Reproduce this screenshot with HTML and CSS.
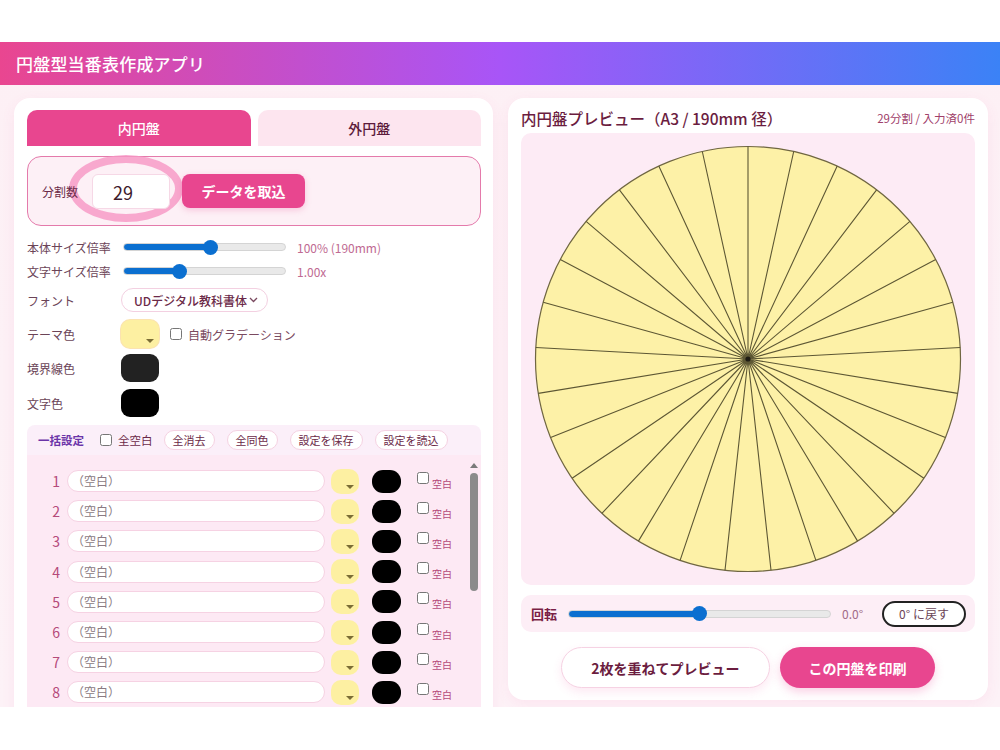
FILE: index.html
```html
<!DOCTYPE html>
<html lang="ja">
<head>
  <meta charset="UTF-8">
  <meta name="viewport" content="width=device-width, initial-scale=1.0">
  <title>円盤型当番表作成アプリ</title>
  <link rel="stylesheet" href="styles.css">
</head>
<body>
  <div class="screen">
    <header class="app-header">
      <h1>円盤型当番表作成アプリ</h1>
    </header>

    <main class="workspace">
      <section class="panel editor">
        <div class="tabs">
          <div class="tab active">内円盤</div>
          <div class="tab">外円盤</div>
        </div>

        <div class="split-box">
          <span class="highlight-ring"></span>
          <span class="split-label">分割数</span>
          <div class="count-input">29</div>
          <button class="import-button">データを取込</button>
        </div>

        <div class="setting-row slim first">
          <span class="setting-label">本体サイズ倍率</span>
          <input class="range" type="range" min="0" max="100" value="54" style="--fill: 88px">
          <span class="setting-value">100% (190mm)</span>
        </div>
        <div class="setting-row slim">
          <span class="setting-label">文字サイズ倍率</span>
          <input class="range" type="range" min="0" max="100" value="33" style="--fill: 57px">
          <span class="setting-value">1.00x</span>
        </div>
        <div class="setting-row font-row">
          <span class="setting-label">フォント</span>
          <div class="font-select">
            UDデジタル教科書体
            <svg width="9" height="6" viewBox="0 0 9 6"><path d="M1 1l3.5 3.5L8 1" fill="none" stroke="#7a4a60" stroke-width="1.3"/></svg>
          </div>
        </div>
        <div class="setting-row">
          <span class="setting-label">テーマ色</span>
          <div class="swatch yellow"></div>
          <label class="check-label"><input type="checkbox"> 自動グラデーション</label>
        </div>
        <div class="setting-row">
          <span class="setting-label">境界線色</span>
          <div class="swatch charcoal"></div>
        </div>
        <div class="setting-row last">
          <span class="setting-label">文字色</span>
          <div class="swatch black"></div>
        </div>

        <div class="bulk-bar">
          <span class="bulk-title">一括設定</span>
          <label class="check-label bulk-check"><input type="checkbox"> 全空白</label>
          <button class="pill">全消去</button>
          <button class="pill">全同色</button>
          <button class="pill">設定を保存</button>
          <button class="pill">設定を読込</button>
        </div>

        <div class="segment-list">
          <div class="segment-rows">
            <div class="segment-row"><span class="seg-num">1</span><div class="seg-input">（空白）</div><div class="seg-color"></div><div class="seg-text"></div><label class="seg-blank"><input type="checkbox"><span>空白</span></label></div>
            <div class="segment-row"><span class="seg-num">2</span><div class="seg-input">（空白）</div><div class="seg-color"></div><div class="seg-text"></div><label class="seg-blank"><input type="checkbox"><span>空白</span></label></div>
            <div class="segment-row"><span class="seg-num">3</span><div class="seg-input">（空白）</div><div class="seg-color"></div><div class="seg-text"></div><label class="seg-blank"><input type="checkbox"><span>空白</span></label></div>
            <div class="segment-row"><span class="seg-num">4</span><div class="seg-input">（空白）</div><div class="seg-color"></div><div class="seg-text"></div><label class="seg-blank"><input type="checkbox"><span>空白</span></label></div>
            <div class="segment-row"><span class="seg-num">5</span><div class="seg-input">（空白）</div><div class="seg-color"></div><div class="seg-text"></div><label class="seg-blank"><input type="checkbox"><span>空白</span></label></div>
            <div class="segment-row"><span class="seg-num">6</span><div class="seg-input">（空白）</div><div class="seg-color"></div><div class="seg-text"></div><label class="seg-blank"><input type="checkbox"><span>空白</span></label></div>
            <div class="segment-row"><span class="seg-num">7</span><div class="seg-input">（空白）</div><div class="seg-color"></div><div class="seg-text"></div><label class="seg-blank"><input type="checkbox"><span>空白</span></label></div>
            <div class="segment-row"><span class="seg-num">8</span><div class="seg-input">（空白）</div><div class="seg-color"></div><div class="seg-text"></div><label class="seg-blank"><input type="checkbox"><span>空白</span></label></div>
          </div>
          <div class="scroll-track">
            <span class="scroll-arrow"></span>
            <span class="scroll-thumb"></span>
          </div>
        </div>
      </section>

      <section class="panel preview">
        <div class="preview-head">
          <h2>内円盤プレビュー（A3 / 190mm 径）</h2>
          <span class="preview-meta">29分割 / 入力済0件</span>
        </div>

        <div class="disk-area">
          <svg width="454" height="452" viewBox="-227 -226 454 452">
            <circle cx="0" cy="0" r="212.5" fill="#fdf1a7" stroke="#6f6641" stroke-width="1.2"/>
            <path fill="none" stroke="#5d5734" stroke-width="1.1" d="
              M0 0L0 -212.5 M0 0L45.7 -207.5 M0 0L89.2 -192.9 M0 0L128.6 -169.2
              M0 0L161.9 -137.6 M0 0L187.7 -99.5 M0 0L204.8 -56.8 M0 0L212.2 -11.5
              M0 0L209.7 34.4 M0 0L197.4 78.6 M0 0L175.9 119.3 M0 0L146.1 154.3
              M0 0L109.6 182.1 M0 0L67.9 201.4 M0 0L23 211.2 M0 0L-23 211.2
              M0 0L-67.9 201.4 M0 0L-109.6 182.1 M0 0L-146.1 154.3 M0 0L-175.9 119.3
              M0 0L-197.4 78.6 M0 0L-209.7 34.4 M0 0L-212.2 -11.5 M0 0L-204.8 -56.8
              M0 0L-187.7 -99.5 M0 0L-161.9 -137.6 M0 0L-128.6 -169.2 M0 0L-89.2 -192.9
              M0 0L-45.7 -207.5"/>
            <circle cx="0" cy="0" r="2.6" fill="#1f1c14"/>
          </svg>
        </div>

        <div class="rotate-bar">
          <span class="rotate-label">回転</span>
          <input class="range rotate-range" type="range" min="-180" max="180" value="0" style="--fill: 132px">
          <span class="rotate-value">0.0°</span>
          <button class="reset-button">0° に戻す</button>
        </div>

        <div class="action-row">
          <button class="action secondary">2枚を重ねてプレビュー</button>
          <button class="action primary">この円盤を印刷</button>
        </div>
      </section>
    </main>
  </div>
</body>
</html>
```

FILE: styles.css
```css
body {
  margin: 0;
  background-color: #fff;
  font-family: "Noto Sans CJK JP", "Noto Sans", sans-serif;
  color: #6b2a48;
}

button {
  font-family: inherit;
  cursor: pointer;
}

.screen {
  margin-top: 42px;
  height: 665px;
  overflow: hidden;
  background: linear-gradient(180deg, #fdf0f5 0%, #fdf2f7 100%);
}

.app-header {
  height: 43px;
  background: linear-gradient(90deg, #e94690 0%, #a855f7 50%, #3b82f6 100%);
}

.app-header h1 {
  margin: 0;
  padding-left: 16px;
  line-height: 43px;
  font-size: 17px;
  font-weight: 500;
  color: #fff;
  letter-spacing: 0.2px;
}

.workspace {
  display: grid;
  grid-template-columns: 479px 480px;
  gap: 15px;
  padding: 13px 12px 0 14px;
  align-items: start;
}

.panel {
  background-color: #fff;
  border-radius: 16px;
  box-shadow: 0 4px 14px rgba(236, 72, 153, 0.08);
}

/* ---------- editor ---------- */

.editor {
  padding: 12px 12px 40px 13px;
  height: 700px;
}

.tabs {
  display: flex;
  gap: 7px;
}

.tab {
  flex: 1;
  height: 36px;
  line-height: 36px;
  text-align: center;
  border-radius: 10px 10px 0 0;
  background-color: #fde5ef;
  color: #5c1b3b;
  font-size: 14px;
  font-weight: 500;
}

.tab.active {
  background-color: #e8468f;
  color: #fff;
}

.split-box {
  position: relative;
  display: flex;
  align-items: center;
  box-sizing: border-box;
  height: 70px;
  margin-top: 10px;
  padding-left: 14px;
  border: 1.5px solid #e47aab;
  border-radius: 14px;
  background-color: #fdf0f6;
}

.highlight-ring {
  position: absolute;
  left: 41px;
  top: -2px;
  width: 98px;
  height: 51px;
  border: 8px solid rgba(246, 150, 196, 0.8);
  border-radius: 50%;
}

.split-label {
  position: relative;
  width: 50px;
  font-size: 12px;
  color: #6b2a48;
}

.count-input {
  position: relative;
  box-sizing: border-box;
  width: 78px;
  height: 35px;
  line-height: 35px;
  padding-left: 20px;
  background-color: #fff;
  border: 1px solid #f6d8e6;
  border-radius: 6px;
  font-size: 18px;
  color: #3d1a2c;
}

.import-button {
  position: relative;
  margin-left: 12px;
  width: 123px;
  height: 34px;
  border: none;
  border-radius: 8px;
  background-color: #e8468f;
  color: #fff;
  font-size: 14px;
  font-weight: 700;
  box-shadow: 0 2px 6px rgba(232, 70, 143, 0.25);
}

.setting-row {
  display: flex;
  align-items: center;
  height: 28px;
  margin-top: 6px;
}

.setting-row.slim {
  height: 24px;
  margin-top: 0;
}

.setting-row.first {
  margin-top: 9px;
}

.setting-row.font-row {
  margin-top: 3px;
}

.setting-row.last {
  margin-top: 7px;
}

.setting-label {
  width: 94px;
  flex-shrink: 0;
  font-size: 12px;
  color: #6b4457;
}

.setting-value {
  margin-left: 11px;
  font-size: 12px;
  color: #c06a92;
}

.range {
  -webkit-appearance: none;
  appearance: none;
  width: 163px;
  height: 16px;
  margin: 0 0 0 2px;
  background: transparent;
}

.range::-webkit-slider-runnable-track {
  height: 8px;
  border-radius: 4px;
  border: 1px solid #d4d4d4;
  background: linear-gradient(to right, #0b6fd0 var(--fill), #e9e9e9 var(--fill));
}

.range::-webkit-slider-thumb {
  -webkit-appearance: none;
  width: 15px;
  height: 15px;
  margin-top: -4.5px;
  border-radius: 50%;
  background-color: #0b6fd0;
  border: none;
}

.font-select {
  display: flex;
  align-items: center;
  justify-content: space-between;
  box-sizing: border-box;
  width: 147px;
  height: 24px;
  padding: 0 9px 0 12px;
  border: 1px solid #f3d0e1;
  border-radius: 12px;
  font-size: 12px;
  font-weight: 500;
  color: #6b2a48;
}

.swatch {
  position: relative;
  width: 38px;
  height: 28px;
  border-radius: 9px;
}

.swatch.yellow {
  background-color: #fdf0a2;
  box-shadow: 0 0 0 1px #fbe3b0;
}

.swatch.yellow::after,
.seg-color::after {
  content: "";
  position: absolute;
  right: 5px;
  bottom: 5px;
  border-left: 4px solid transparent;
  border-right: 4px solid transparent;
  border-top: 4px solid #7b6d36;
}

.swatch.charcoal {
  background-color: #222;
}

.swatch.black {
  background-color: #000;
}

.check-label {
  display: flex;
  align-items: center;
  gap: 6px;
  margin-left: 11px;
  font-size: 12px;
  color: #7a4a60;
}

.check-label input,
.seg-blank input {
  width: 12px;
  height: 12px;
  margin: 0;
}

/* ---------- bulk bar ---------- */

.bulk-bar {
  display: flex;
  align-items: center;
  height: 30px;
  margin-top: 8px;
  padding-left: 11px;
  border-radius: 8px 8px 0 0;
  background-color: #fbeff9;
}

.bulk-title {
  font-size: 11.5px;
  font-weight: 700;
  color: #6b35a8;
}

.bulk-check {
  margin-left: 16px;
  margin-right: 11px;
  font-size: 11.5px;
  color: #6b2a48;
}

.pill {
  height: 20px;
  margin-right: 12px;
  padding: 0 8px;
  border: 1px solid #f5d2e2;
  border-radius: 10px;
  background-color: #fff;
  font-size: 11px;
  color: #6b2a48;
}

/* ---------- segment list ---------- */

.segment-list {
  display: flex;
  background-color: #fde9f4;
  padding-top: 11px;
  padding-bottom: 20px;
}

.segment-rows {
  flex: 1;
}

.segment-row {
  display: flex;
  align-items: center;
  height: 30.2px;
}

.seg-num {
  width: 33px;
  margin-right: 7px;
  text-align: right;
  font-size: 14px;
  color: #b54a7a;
}

.seg-input {
  box-sizing: border-box;
  width: 258px;
  height: 22px;
  line-height: 20px;
  padding-left: 4px;
  background-color: #fff;
  border: 1px solid #f6d2e3;
  border-radius: 11px;
  font-size: 12px;
  color: #8a7a82;
}

.seg-color {
  position: relative;
  width: 28px;
  height: 25px;
  margin-left: 6px;
  border-radius: 10px;
  background-color: #fdf0a2;
}

.seg-text {
  width: 29px;
  height: 23px;
  margin-left: 13px;
  border-radius: 11px;
  background-color: #000;
}

.seg-blank {
  display: flex;
  align-items: flex-start;
  gap: 3px;
  margin-left: 16px;
  font-size: 10px;
  color: #b54a7a;
}

.seg-blank span {
  padding-top: 4px;
}

.scroll-track {
  width: 14px;
  display: flex;
  flex-direction: column;
  align-items: center;
}

.scroll-arrow {
  margin-top: -3px;
  border-left: 4px solid transparent;
  border-right: 4px solid transparent;
  border-bottom: 5px solid #7a7a7a;
}

.scroll-thumb {
  width: 8px;
  height: 118px;
  margin-top: 5px;
  border-radius: 4px;
  background-color: #8b8b8b;
}

/* ---------- preview ---------- */

.preview {
  padding: 10px 13px 12px 13px;
}

.preview-head {
  display: flex;
  align-items: center;
  justify-content: space-between;
  height: 20px;
}

.preview-head h2 {
  margin: 0;
  font-size: 15.5px;
  font-weight: 500;
  color: #6b1d3f;
}

.preview-meta {
  font-size: 11.5px;
  color: #a0406a;
}

.disk-area {
  display: flex;
  justify-content: center;
  margin-top: 5px;
  height: 452px;
  border-radius: 10px;
  background-color: #fdebf5;
}

.rotate-bar {
  display: flex;
  align-items: center;
  height: 37px;
  margin-top: 10px;
  padding-left: 10px;
  border-radius: 10px;
  background-color: #fdeef6;
}

.rotate-label {
  width: 37px;
  font-size: 13px;
  font-weight: 700;
  color: #7a1f45;
}

.rotate-range {
  width: 263px;
  margin: 0;
}

.rotate-value {
  margin-left: 11px;
  width: 40px;
  font-size: 12px;
  color: #a06a86;
}

.reset-button {
  width: 84px;
  height: 26px;
  border: 2px solid #222;
  border-radius: 13px;
  background-color: #fff;
  font-size: 12px;
  color: #6b4457;
}

.action-row {
  display: flex;
  justify-content: center;
  gap: 10px;
  margin-top: 15px;
}

.action {
  height: 41px;
  border-radius: 21px;
  font-size: 14px;
  font-weight: 700;
}

.action.secondary {
  width: 209px;
  border: 1px solid #f6d2e3;
  background-color: #fff;
  color: #6b1d3f;
  box-shadow: 0 4px 10px rgba(236, 72, 153, 0.12);
}

.action.primary {
  width: 155px;
  border: none;
  background-color: #e8468f;
  color: #fff;
  box-shadow: 0 4px 10px rgba(236, 72, 153, 0.25);
}
```
